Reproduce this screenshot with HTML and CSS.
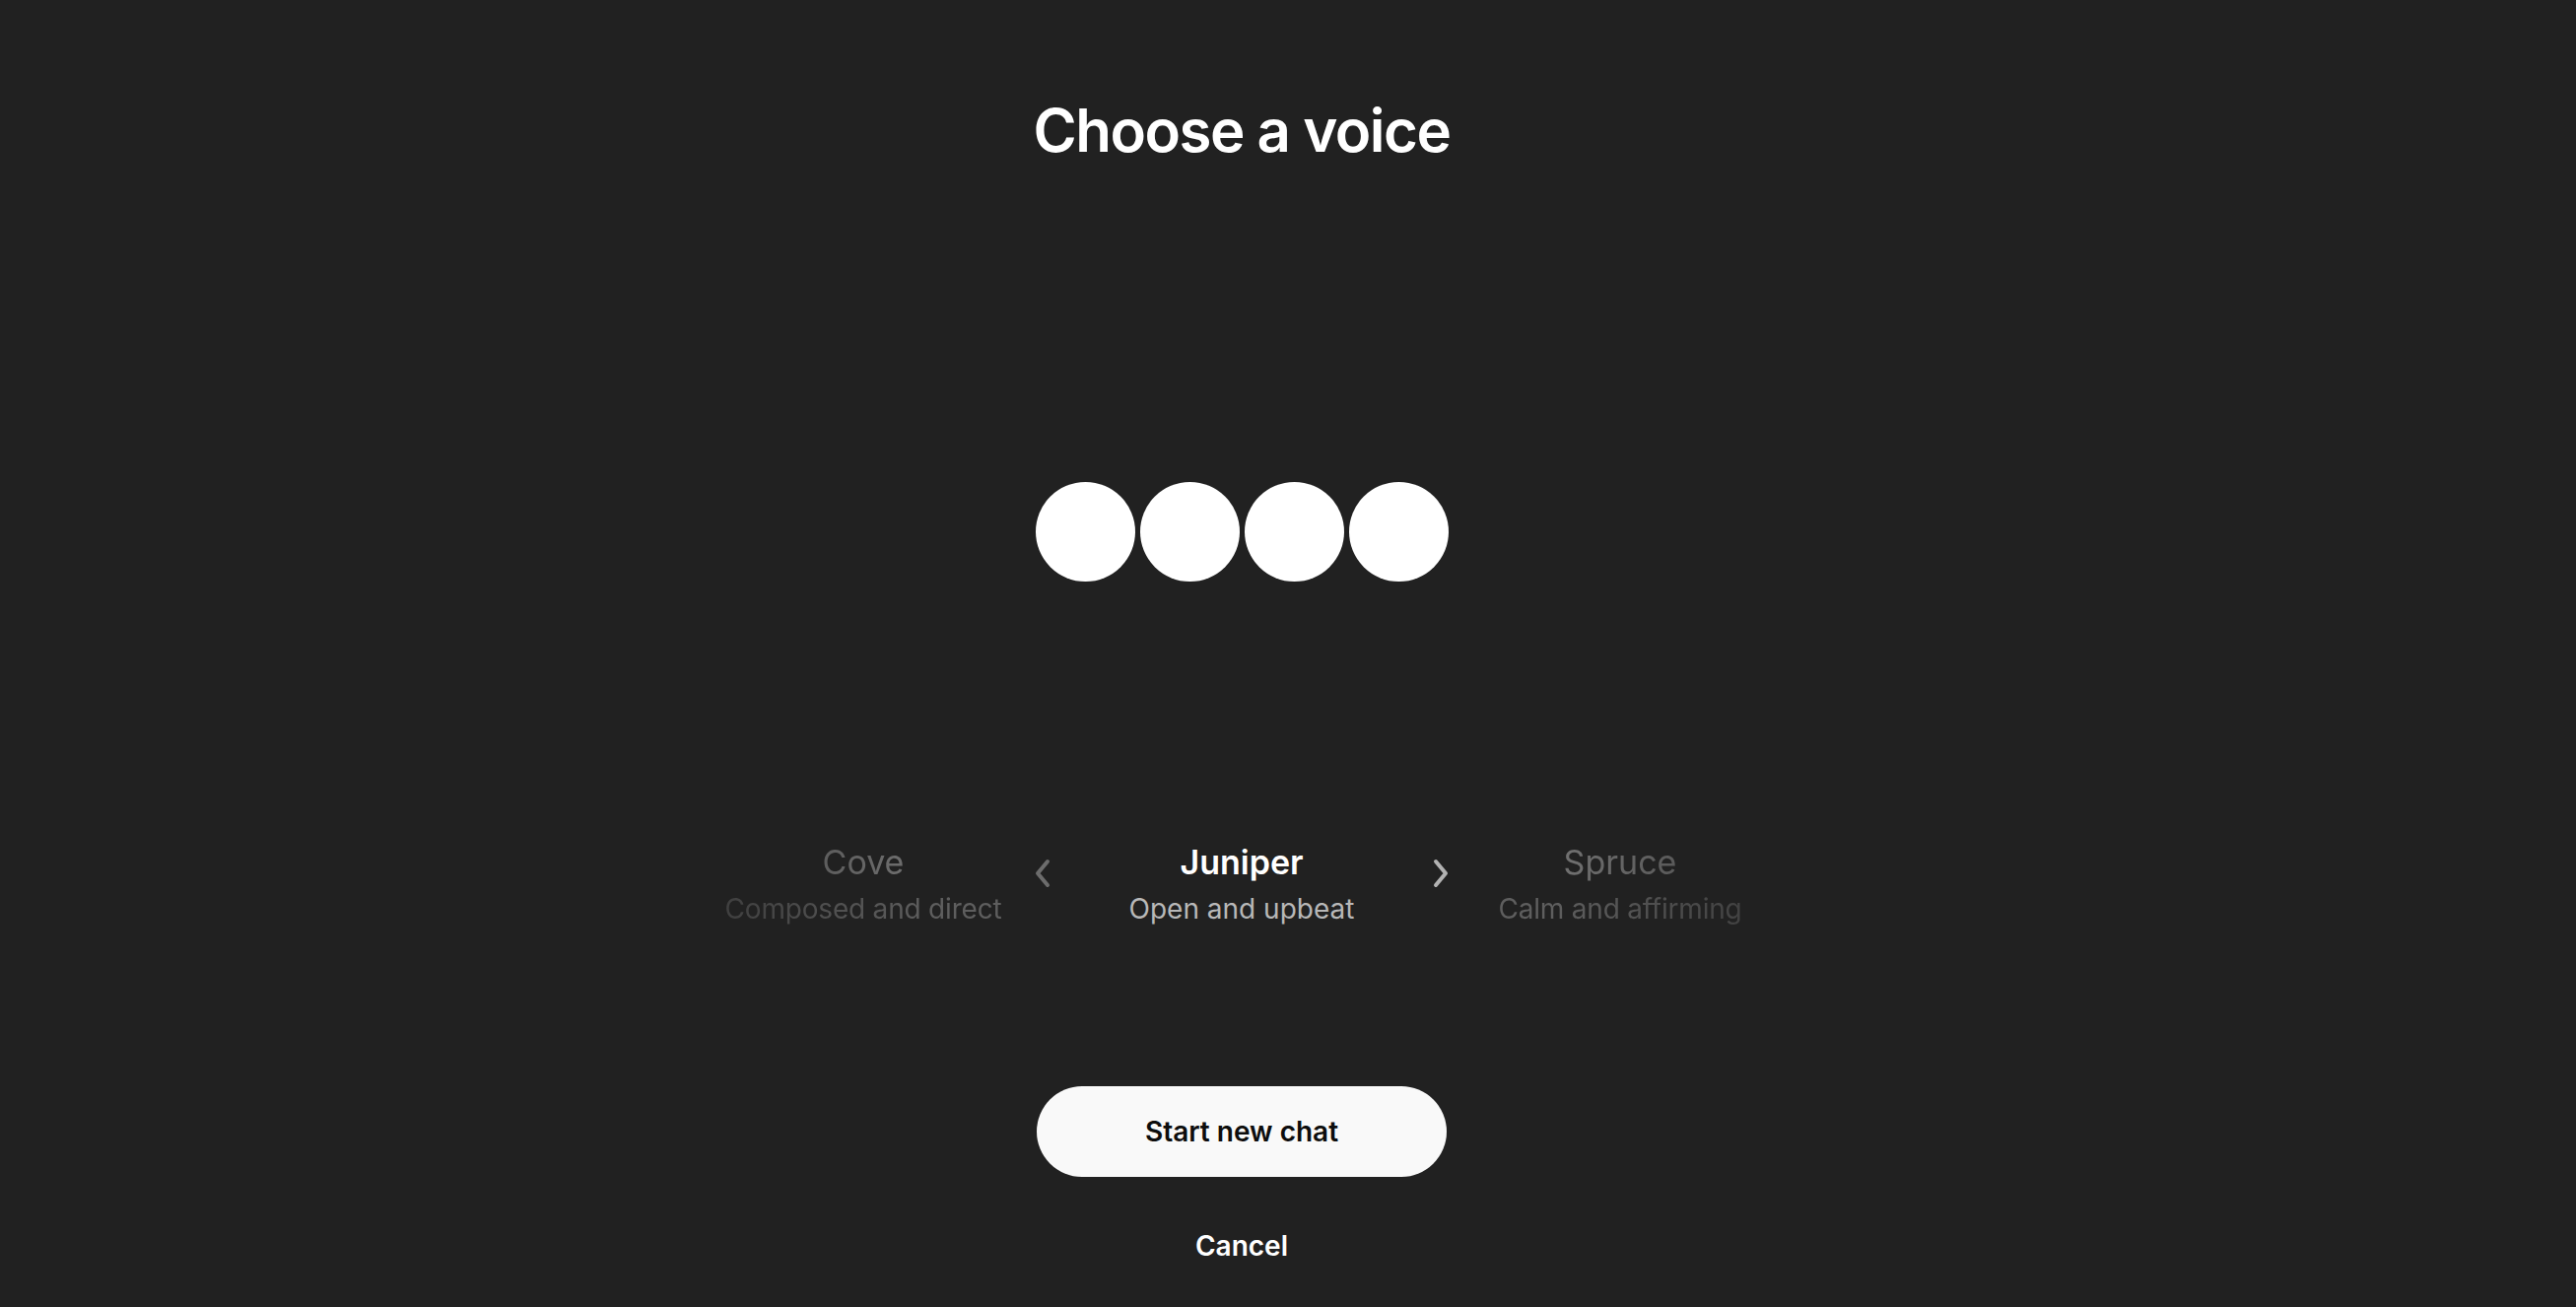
FILE: index.html
```html
<!DOCTYPE html>
<html lang="en">
<head>
<meta charset="utf-8">
<title>Choose a voice</title>
<link rel="stylesheet" href="styles.css">
</head>
<body>
<main class="page">
  <h1 class="title">Choose a voice</h1>
  <div class="orbs">
    <span class="orb"></span>
    <span class="orb"></span>
    <span class="orb"></span>
    <span class="orb"></span>
  </div>
  <div class="carousel">
    <div class="voice voice-side voice-left">
      <div class="voice-name">Cove</div>
      <div class="voice-desc">Composed and direct</div>
    </div>
    <button class="nav nav-prev" aria-label="Previous voice">
      <svg width="20" height="32" viewBox="0 0 20 32"><path d="M15 4 L5 16 L15 28" fill="none" stroke="currentColor" stroke-width="4" stroke-linecap="round" stroke-linejoin="round"/></svg>
    </button>
    <div class="voice voice-current">
      <div class="voice-name">Juniper</div>
      <div class="voice-desc">Open and upbeat</div>
    </div>
    <button class="nav nav-next" aria-label="Next voice">
      <svg width="20" height="32" viewBox="0 0 20 32"><path d="M5 4 L15 16 L5 28" fill="none" stroke="currentColor" stroke-width="4" stroke-linecap="round" stroke-linejoin="round"/></svg>
    </button>
    <div class="voice voice-side voice-right">
      <div class="voice-name">Spruce</div>
      <div class="voice-desc">Calm and affirming</div>
    </div>
  </div>
  <button class="primary">Start new chat</button>
  <button class="cancel">Cancel</button>
</main>
</body>
</html>
```

FILE: styles.css
```css
html, body {
  margin: 0;
  padding: 0;
  background: #212121;
}

body {
  width: 2614px;
  height: 1326px;
  overflow: hidden;
  font-family: Inter, "Noto Sans", "Liberation Sans", sans-serif;
  color: #ffffff;
}

.page {
  width: 2520px;
  height: 1326px;
  display: flex;
  flex-direction: column;
  align-items: center;
  padding-top: 102px;
  box-sizing: border-box;
}

.title {
  margin: 0;
  font-size: 60px;
  line-height: 60px;
  font-weight: 600;
  letter-spacing: -1.5px;
  color: #ffffff;
}

.orbs {
  margin-top: 327px;
  display: flex;
  gap: 5px;
}

.orb {
  width: 101px;
  height: 101px;
  border-radius: 50%;
  background: #ffffff;
}

.carousel {
  margin-top: 264px;
  display: flex;
  align-items: flex-start;
}

.voice {
  display: flex;
  flex-direction: column;
  align-items: center;
  white-space: nowrap;
}

.voice-side {
  width: 324px;
}

.voice-current {
  width: 364px;
}

.voice-name {
  font-size: 34px;
  line-height: 42px;
  font-weight: 400;
}

.voice-desc {
  margin-top: 8px;
  font-size: 28px;
  line-height: 36px;
  font-weight: 400;
}

.voice-current .voice-name {
  font-weight: 600;
  color: #ffffff;
}

.voice-current .voice-desc {
  color: #b8b8b8;
}

.voice-side .voice-name {
  color: #727272;
}

.voice-side .voice-desc {
  color: #5e5e5e;
  letter-spacing: -0.2px;
}

.voice-left {
  -webkit-mask-image: linear-gradient(to right, rgba(0,0,0,0.45) 0%, #000 70%);
  mask-image: linear-gradient(to right, rgba(0,0,0,0.45) 0%, #000 70%);
}

.voice-right {
  -webkit-mask-image: linear-gradient(to left, rgba(0,0,0,0.45) 0%, #000 70%);
  mask-image: linear-gradient(to left, rgba(0,0,0,0.45) 0%, #000 70%);
}

.nav {
  width: 40px;
  height: 32px;
  margin-top: 16px;
  padding: 0;
  border: 0;
  background: none;
  display: flex;
  align-items: center;
  justify-content: center;
}

.nav-prev {
  color: #6c6c6c;
}

.nav-next {
  color: #b2b2b2;
}

.primary {
  margin-top: 162px;
  width: 416px;
  height: 92px;
  border: 0;
  border-radius: 46px;
  background: #f9f9f9;
  color: #0d0d0d;
  font-family: inherit;
  font-size: 28px;
  font-weight: 600;
  padding: 0;
}

.cancel {
  margin-top: 52px;
  border: 0;
  background: none;
  padding: 0;
  color: #ffffff;
  font-family: inherit;
  font-size: 28px;
  line-height: 36px;
  font-weight: 600;
}
```
